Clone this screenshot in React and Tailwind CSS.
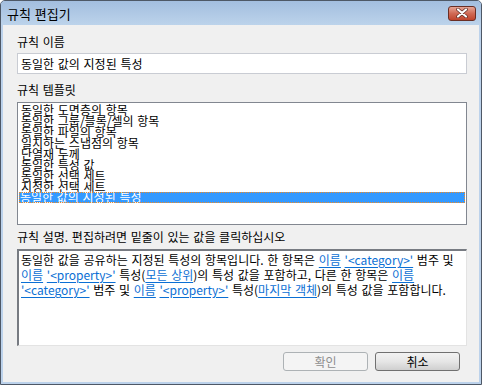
import React from "react";

const templates = [
  "동일한 도면층의 항목",
  "동일한 그룹/블록/셀의 항목",
  "동일한 파일의 항목",
  "일치하는 스냅점의 항목",
  "단열재 두께",
  "동일한 특성 값",
  "동일한 선택 세트",
  "지정한 선택 세트",
  "동일한 값의 지정된 특성",
];

const Link = ({ children }) => (
  <span className="text-[#0b6fd4] underline underline-offset-[2px]">{children}</span>
);

const CloseButton = () => (
  <div className="w-[28px] h-[15px] rounded-[3px] border border-[#6a2e24] bg-gradient-to-b from-[#e6a595] via-[#d06a55] to-[#c0442c] flex items-center justify-center">
    <svg width="14" height="10" viewBox="0 0 14 10">
      <path d="M3 1.5 L11 8.5 M11 1.5 L3 8.5" stroke="#5a2a22" strokeWidth="3.6" strokeLinecap="round" />
      <path d="M3 1.5 L11 8.5 M11 1.5 L3 8.5" stroke="#ffffff" strokeWidth="2.2" strokeLinecap="round" />
    </svg>
  </div>
);

export default function App() {
  const selected = templates.length - 1;

  return (
    <div
      className="w-[482px] h-[385px] bg-[#bcd2eb] border border-[#4e5866] rounded-t-[5px] flex flex-col text-black"
      style={{ fontFamily: '"Noto Sans CJK KR", "Noto Sans", sans-serif' }}
    >
      {/* title bar */}
      <div className="h-[24px] shrink-0 rounded-t-[4px] bg-gradient-to-b from-[#a3bedf] to-[#bcd3eb] flex items-center justify-between pl-[6px] pr-[5px]">
        <span className="text-[13px] leading-[15px] [word-spacing:1px]">규칙 편집기</span>
        <CloseButton />
      </div>

      {/* client area */}
      <div className="flex-1 mx-[2px] mb-[2px] bg-[#f0f0f0] pl-[14px] pr-[12px] pt-[10px] flex flex-col text-[12px] [word-spacing:1px]">
        <div className="leading-[14px] h-[14px]">규칙 이름</div>
        <div className="mt-[4px] h-[21px] border border-[#c9ccd3] bg-white px-[3px] flex items-center leading-[14px]">
          동일한 값의 지정된 특성
        </div>

        <div className="mt-[9px] leading-[14px] h-[14px]">규칙 템플릿</div>
        <div className="mt-[5px] h-[123px] border border-[#828790] bg-white p-[1px] flex flex-col">
          {templates.map((t, i) => (
            <div
              key={t}
              className={
                i === selected
                  ? "h-[11px] leading-[10px] px-[1px] bg-[#3399ff] text-white outline outline-1 outline-dotted outline-[#f08a24] -outline-offset-1 whitespace-nowrap"
                  : "h-[11px] leading-[11px] px-[2px] whitespace-nowrap"
              }
            >
              {t}
            </div>
          ))}
        </div>

        <div className="mt-[5px] leading-[14px] h-[14px]">규칙 설명. 편집하려면 밑줄이 있는 값을 클릭하십시오</div>
        <div className="mt-[5px] h-[97px] bg-white border-t-2 border-l-2 border-r border-b border-t-[#777b82] border-l-[#777b82] border-r-[#e3e3e3] border-b-[#e3e3e3] px-[2px] pt-[1px] leading-[15px]">
          <div className="whitespace-nowrap">
            동일한 값을 공유하는 지정된 특성의 항목입니다. 한 항목은 <Link>이름</Link> <Link>{"'<category>'"}</Link> 범주 및
          </div>
          <div className="whitespace-nowrap">
            <Link>이름</Link> <Link>{"'<property>'"}</Link> 특성(<Link>모든 상위</Link>)의 특성 값을 포함하고, 다른 한 항목은 <Link>이름</Link>
          </div>
          <div className="whitespace-nowrap">
            <Link>{"'<category>'"}</Link> 범주 및 <Link>이름</Link> <Link>{"'<property>'"}</Link> 특성(<Link>마지막 객체</Link>)의 특성 값을 포함합니다.
          </div>
        </div>

        <div className="mt-[6px] flex justify-end gap-[7px] pr-[7px]">
          <button className="w-[85px] h-[19px] rounded-[3px] border border-[#adb2b5] bg-[#f4f4f4] text-[#8d8d8d] text-[12px] leading-[14px]">
            확인
          </button>
          <button className="w-[85px] h-[19px] rounded-[3px] border border-[#707070] bg-gradient-to-b from-[#f2f2f2] via-[#e6e6e6] to-[#cfcfcf] text-black text-[12px] leading-[14px]">
            취소
          </button>
        </div>
      </div>
    </div>
  );
}
